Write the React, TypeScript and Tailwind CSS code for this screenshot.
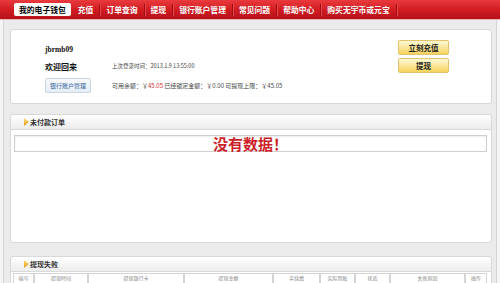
const cjk = "font-['Noto_Sans_CJK_SC','Noto_Sans',sans-serif]";

const tabs = ["充值", "订单查询", "提现", "银行账户管理", "常见问题", "帮助中心", "购买无宇币或元宝"];

const cols: [string, number][] = [
  ["编号", 21],
  ["提现时间", 54],
  ["提现银行卡", 96],
  ["提现金额", 89],
  ["手续费", 47],
  ["实际到账", 35],
  ["状态", 35],
  ["失败原因", 75],
  ["操作", 22],
];

function SectionHeader({ title }: { title: string }) {
  return (
    <div className="h-[16px] flex items-center pl-[13px] border border-[#d9d9d9] rounded-t-[3px] bg-gradient-to-b from-[#ffffff] to-[#ececec]">
      <svg width="5" height="8" viewBox="0 0 5 8" className="shrink-0">
        <defs>
          <linearGradient id={"g" + title} x1="0" y1="0" x2="0" y2="1">
            <stop offset="0" stopColor="#fbe27a" />
            <stop offset="1" stopColor="#e79a1c" />
          </linearGradient>
        </defs>
        <path d="M0 0 L5 4 L0 8 Z" fill={"url(#g" + title + ")"} />
      </svg>
      <span className="ml-[1px] text-[7px] font-bold text-[#333] leading-none">{title}</span>
    </div>
  );
}

export default function App() {
  return (
    <div className={`w-[500px] h-[283px] overflow-hidden bg-[#f4f4f4] flex flex-col ${cjk}`}>
      {/* top nav */}
      <nav className="h-[20px] shrink-0 flex items-center pl-[14px] bg-gradient-to-b from-[#ea3a3e] via-[#d21c22] to-[#b5111a] border-b border-[#f2b3b3]">
        <div className="h-[13px] px-[5px] flex items-center bg-white rounded-[2px] text-[7.8px] font-bold text-black leading-none">
          我的电子钱包
        </div>
        <div className="w-[1px]" />
        {tabs.map((t) => (
          <div key={t} className="flex items-center">
            <span className="px-[6px] text-[7.8px] font-bold text-white leading-none">{t}</span>
            <span className="w-px h-[12px] bg-[#a30c12] shadow-[1px_0_0_#e4484c]" />
          </div>
        ))}
      </nav>

      <div className="flex-1 mx-[3px] border-x border-[#d6d6d6] bg-[#ebebeb] pl-[6px] pr-[4px] pt-[9px]">
        {/* account card */}
        <div className="h-[75px] flex bg-white border border-[#d8d8d8] rounded-[3px]">
          <div className="flex-1 pl-[34px] pt-[14px]">
            <div className="h-[12px] flex items-center text-[7.5px] font-bold text-[#111] font-['Liberation_Serif',serif]">
              jbrmb09
            </div>
            <div className="h-[12px] mt-[5px] flex items-center">
              <span className="w-[67px] text-[8px] font-bold text-[#111] leading-none">欢迎回来</span>
              <span className="text-[5.5px] text-[#444] leading-none">上次登录时间：2013.1.9 13:55:00</span>
            </div>
            <div className="h-[15px] mt-[5px] flex items-center">
              <div className="w-[46px] h-[15px] flex items-center justify-center border border-[#c9d5e2] rounded-[2px] bg-gradient-to-b from-[#f7fafd] to-[#e6eef6] text-[6px] text-[#33629a] leading-none">
                银行账户管理
              </div>
              <span className="ml-[21px] text-[6px] text-[#444] leading-none whitespace-nowrap">
                可用余额：￥<span className="text-[#d9262c]">45.05</span> 已经锁定金额：￥0.00 可提现上限：￥45.05
              </span>
            </div>
          </div>
          <div className="pr-[42px] pt-[10px] flex flex-col gap-[3px]">
            {["立刻充值", "提现"].map((b) => (
              <div
                key={b}
                className="w-[51px] h-[15px] flex items-center justify-center rounded-[2px] border border-[#e2c36b] bg-gradient-to-b from-[#fff9d2] to-[#f6d359] text-[7.5px] font-bold text-[#222] leading-none"
              >
                {b}
              </div>
            ))}
          </div>
        </div>

        {/* unpaid orders */}
        <div className="mt-[10px]">
          <SectionHeader title="未付款订单" />
          <div className="h-[113px] bg-white border-x border-b border-[#d9d9d9] rounded-b-[3px] pt-[5px] pl-[3px] pr-[4px]">
            <div className="h-[17px] flex items-center justify-center border border-[#cfcfcf] shadow-[inset_0_1px_2px_rgba(0,0,0,0.08)] text-[15px] font-bold text-[#cc1f2a] leading-none">
              没有数据！
            </div>
          </div>
        </div>

        {/* failed withdrawals */}
        <div className="mt-[13px]">
          <SectionHeader title="提现失败" />
          <div className="bg-white border-x border-[#d9d9d9] pl-[2px] pt-[1px] h-[20px]">
            <div className="flex h-[18px]">
              {cols.map(([c, w]) => (
                <div
                  key={c}
                  style={{ width: w }}
                  className="shrink-0 border border-[#d4d4d4] flex items-start justify-center pt-[1px] text-[5px] text-[#888] leading-[6px]"
                >
                  {c}
                </div>
              ))}
            </div>
          </div>
        </div>
      </div>
    </div>
  );
}
